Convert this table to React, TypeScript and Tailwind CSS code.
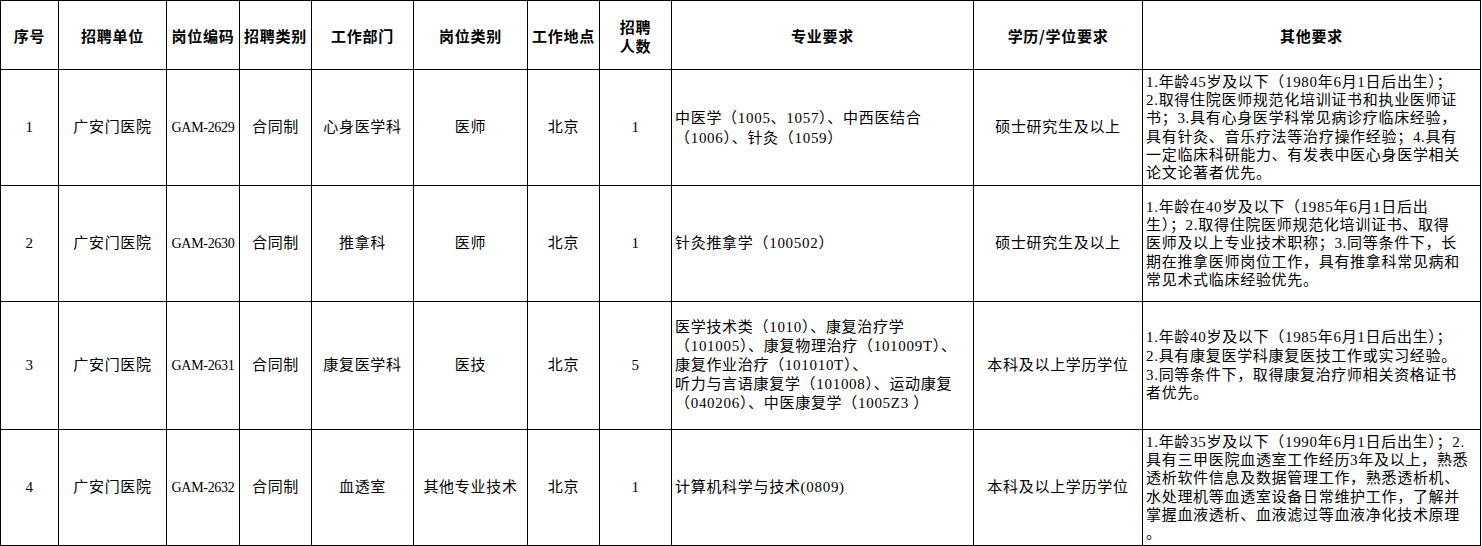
import React from 'react';

// 招聘岗位一览表：11 列，表头 + 4 行
type Row = {
  no: string;
  unit: string;
  code: string;
  kind: string;
  dept: string;
  post: string;
  place: string;
  count: string;
  major: string[];
  edu: string;
  other: string[];
  majorLeading: string;
  otherLeading: string;
};

const rows: Row[] = [
  {
    no: '1',
    unit: '广安门医院',
    code: 'GAM-2629',
    kind: '合同制',
    dept: '心身医学科',
    post: '医师',
    place: '北京',
    count: '1',
    major: ['中医学（1005、1057）、中西医结合', '（1006）、针灸（1059）'],
    edu: '硕士研究生及以上',
    other: [
      '1.年龄45岁及以下（1980年6月1日后出生）；',
      '2.取得住院医师规范化培训证书和执业医师证',
      '书；3.具有心身医学科常见病诊疗临床经验，',
      '具有针灸、音乐疗法等治疗操作经验；4.具有',
      '一定临床科研能力、有发表中医心身医学相关',
      '论文论著者优先。',
    ],
    majorLeading: 'leading-[20px]',
    otherLeading: 'leading-[18.3px]',
  },
  {
    no: '2',
    unit: '广安门医院',
    code: 'GAM-2630',
    kind: '合同制',
    dept: '推拿科',
    post: '医师',
    place: '北京',
    count: '1',
    major: ['针灸推拿学（100502）'],
    edu: '硕士研究生及以上',
    other: [
      '1.年龄在40岁及以下（1985年6月1日后出',
      '生）；2.取得住院医师规范化培训证书、取得',
      '医师及以上专业技术职称；3.同等条件下，长',
      '期在推拿医师岗位工作，具有推拿科常见病和',
      '常见术式临床经验优先。',
    ],
    majorLeading: 'leading-[19px]',
    otherLeading: 'leading-[18.3px]',
  },
  {
    no: '3',
    unit: '广安门医院',
    code: 'GAM-2631',
    kind: '合同制',
    dept: '康复医学科',
    post: '医技',
    place: '北京',
    count: '5',
    major: [
      '医学技术类（1010）、康复治疗学',
      '（101005）、康复物理治疗（101009T）、',
      '康复作业治疗（101010T）、',
      '听力与言语康复学（101008）、运动康复',
      '（040206）、中医康复学（1005Z3 ）',
    ],
    edu: '本科及以上学历学位',
    other: [
      '1.年龄40岁及以下（1985年6月1日后出生）；',
      '2.具有康复医学科康复医技工作或实习经验。',
      '3.同等条件下，取得康复治疗师相关资格证书',
      '者优先。',
    ],
    majorLeading: 'leading-[19px]',
    otherLeading: 'leading-[18.8px]',
  },
  {
    no: '4',
    unit: '广安门医院',
    code: 'GAM-2632',
    kind: '合同制',
    dept: '血透室',
    post: '其他专业技术',
    place: '北京',
    count: '1',
    major: ['计算机科学与技术(0809)'],
    edu: '本科及以上学历学位',
    other: [
      '1.年龄35岁及以下（1990年6月1日后出生）；2.',
      '具有三甲医院血透室工作经历3年及以上，熟悉',
      '透析软件信息及数据管理工作，熟悉透析机、',
      '水处理机等血透室设备日常维护工作，了解并',
      '掌握血液透析、血液滤过等血液净化技术原理',
      '。',
    ],
    majorLeading: 'leading-[19px]',
    otherLeading: 'leading-[18.3px]',
  },
];

const headers = ['序号', '招聘单位', '岗位编码', '招聘类别', '工作部门', '岗位类别', '工作地点', '招聘\n人数', '专业要求', '学历/学位要求', '其他要求'];

function HeadCell({ label }: { label: string }) {
  return (
    <div className="bg-white flex flex-col items-center justify-center pt-[1px] text-[15px] leading-[19px] font-bold text-black font-['Noto_Sans_CJK_SC',sans-serif] whitespace-nowrap">
      {label.split('\n').map((l) => (
        <span key={l}>{l}</span>
      ))}
    </div>
  );
}

function Cell({ children, className = '' }: { children: React.ReactNode; className?: string }) {
  return (
    <div className={`bg-white flex items-center justify-center text-center whitespace-nowrap ${className}`}>
      {children}
    </div>
  );
}

function Lines({ lines, leading }: { lines: string[]; leading: string }) {
  return (
    <div className={`bg-white flex flex-col justify-center items-start pl-[3px] whitespace-nowrap ${leading}`}>
      {lines.map((l, i) => (
        <span key={i}>{l}</span>
      ))}
    </div>
  );
}

export default function App() {
  return (
    <div className="w-[1482px] h-[546px] bg-white">
      <div className="grid grid-cols-[57px_107px_72px_71px_101px_113px_71px_71px_301px_168px_337px] grid-rows-[68px_115px_115px_127px_115px] gap-px p-px bg-black w-fit text-[15px] tracking-[0.7px] text-black font-['Liberation_Serif','Noto_Sans_CJK_SC',serif]">
        {headers.map((h) => (
          <HeadCell key={h} label={h} />
        ))}
        {rows.map((r) => (
          <React.Fragment key={r.no}>
            <Cell>{r.no}</Cell>
            <Cell>{r.unit}</Cell>
            <Cell className="text-[14px] tracking-[-0.3px]">{r.code}</Cell>
            <Cell>{r.kind}</Cell>
            <Cell>{r.dept}</Cell>
            <Cell>{r.post}</Cell>
            <Cell>{r.place}</Cell>
            <Cell>{r.count}</Cell>
            <Lines lines={r.major} leading={r.majorLeading} />
            <Cell>{r.edu}</Cell>
            <Lines lines={r.other} leading={r.otherLeading} />
          </React.Fragment>
        ))}
      </div>
    </div>
  );
}
